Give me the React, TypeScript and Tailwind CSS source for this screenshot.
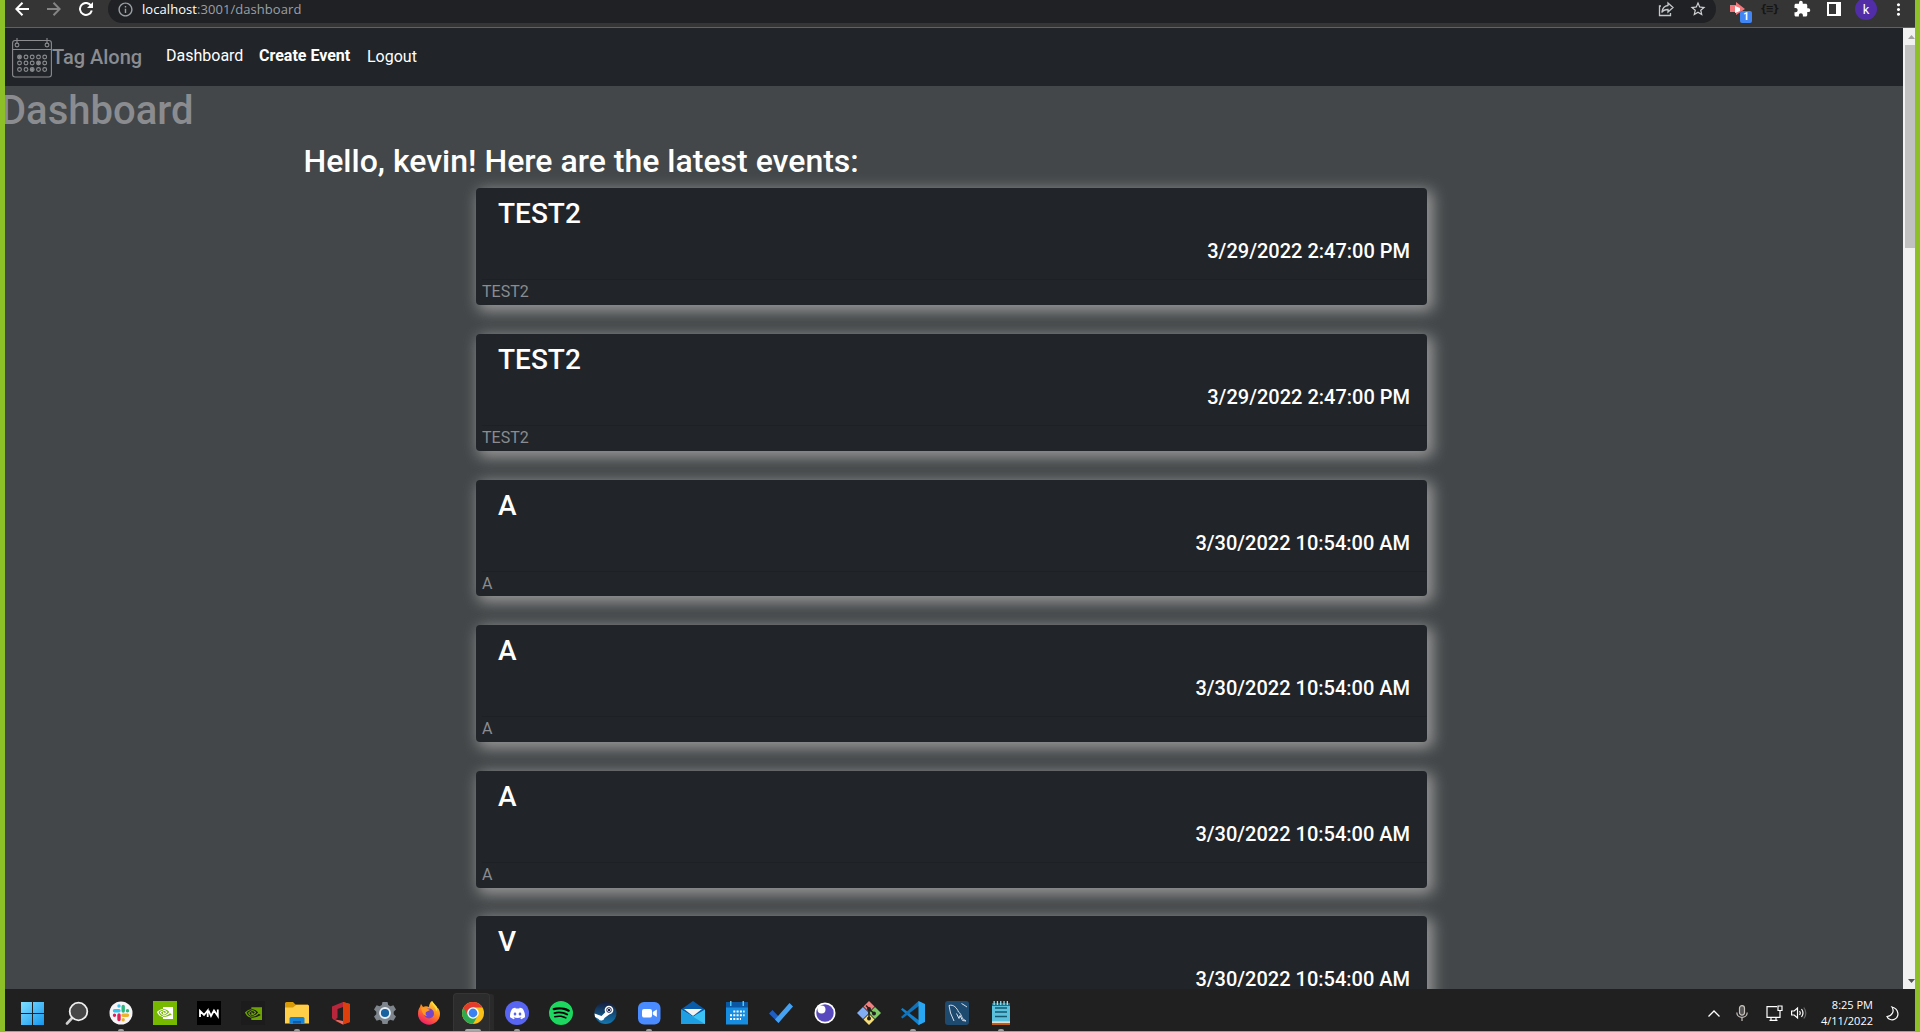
import type { ReactNode } from "react";
import { MdInfoOutline, MdExtension, MdMoreVert, MdStarOutline } from "react-icons/md";
import { BsNvidia, BsDiscord, BsSpotify } from "react-icons/bs";

type EventItem = { title: string; date: string; body: string };

const EVENTS: EventItem[] = [
  { title: "TEST2", date: "3/29/2022 2:47:00 PM", body: "TEST2" },
  { title: "TEST2", date: "3/29/2022 2:47:00 PM", body: "TEST2" },
  { title: "A", date: "3/30/2022 10:54:00 AM", body: "A" },
  { title: "A", date: "3/30/2022 10:54:00 AM", body: "A" },
  { title: "A", date: "3/30/2022 10:54:00 AM", body: "A" },
  { title: "V", date: "3/30/2022 10:54:00 AM", body: "" },
];

function BrowserBar() {
  return (
    <div className="flex h-[28px] shrink-0 overflow-hidden border-b border-[#5f6163] bg-[#353535] text-white">
      <div className="flex h-[18px] w-full items-center">
        <svg className="ml-[10px] size-[14px] shrink-0" viewBox="0 0 14 14" fill="none" stroke="#fff" strokeWidth="2">
          <path d="M14 7H1.500M7.500 .8L1.300 7l6.200 6.200" />
        </svg>
        <svg className="ml-[18px] size-[14px] shrink-0" viewBox="0 0 14 14" fill="none" stroke="#858585" strokeWidth="2">
          <path d="M0 7h12.500M6.500 .8L12.700 7l-6.200 6.200" />
        </svg>
        <svg className="ml-[18px] size-[14px] shrink-0" viewBox="0 0 14 14" fill="none" stroke="#fff" strokeWidth="2">
          <path d="M12 3.600A6 6 0 1 0 12.800 8.500" />
          <path d="M14 0v6H8z" fill="#fff" stroke="none" />
        </svg>
        <div className="ml-[15px] flex h-[28px] w-[1608px] shrink-0 items-center rounded-full bg-[#202124]">
          <MdInfoOutline className="ml-[9px] size-[17px] text-[#9aa0a6]" />
          <span className="ml-[8px] pt-px font-['Open_Sans',sans-serif] text-[13px] tracking-[0.06px] text-[#9aa0a6]">
            <span className="text-white">localhost</span>:3001/dashboard
          </span>
          <svg className="mr-[15px] ml-auto size-[16px]" viewBox="0 0 16 16" fill="none" stroke="#c4c7c9" strokeWidth="1.3">
            <path d="M3 5H1.500v9.500h11V12" />
            <path d="M10 2l5 4.500-5 4.500V8.500C7 8.500 5 9.500 3.800 11.500 4.300 7.500 6.500 4.800 10 4.500z" />
          </svg>
          <MdStarOutline className="mr-[9px] size-[18px] text-[#d0d2d4]" />
        </div>
        <div className="relative ml-[13px] h-[28px] w-[24px] shrink-0">
          <svg className="absolute top-[7px] left-0 h-[14px] w-[18px]" viewBox="0 0 18 14">
            <path d="M1 3h6V0l9 7-9 6v-3H1z" fill="#f4777c" />
            <path d="M6 4l5 2v3l-5 2z" fill="#fff" />
          </svg>
          <span className="absolute top-[16px] left-[11px] flex size-[12px] items-center justify-center rounded-[2px] bg-[#4285f4] font-['Roboto',sans-serif] text-[10px] leading-none font-bold">1</span>
        </div>
        <span className="ml-[7px] w-[16px] text-center font-['DejaVu_Sans',sans-serif] text-[10px] leading-none font-bold tracking-[-1.5px] text-[#161616]">{"{≡}"}</span>
        <MdExtension className="ml-[17px] size-[18px] shrink-0" />
        <div className="ml-[16px] h-[14px] w-[14px] shrink-0 border-2 border-r-[5px] border-white" />
        <div className="ml-[14px] flex size-[22px] shrink-0 items-center justify-center rounded-full bg-[#512da8] font-['Roboto',sans-serif] text-[13px] leading-none">k</div>
        <MdMoreVert className="ml-[12px] size-[19px] shrink-0" />
      </div>
    </div>
  );
}

function CalendarLogo() {
  return (
    <svg className="size-[40px]" viewBox="0 0 40 40" fill="none" stroke="#8b8c90" strokeWidth="1.1">
      <rect x="0.6" y="2.500" width="38.800" height="36.500" rx="2.500" />
      <path d="M1 11.500h38M5 0v5M35 0v5" />
      <circle cx="5" cy="7" r="1.900" />
      <circle cx="35" cy="7" r="1.900" />
      {[19, 25, 31.5].map((y) =>
        [7.500, 14, 20.200, 26.500, 32.700].map((x) => <circle key={`${x}-${y}`} cx={x} cy={y} r="1.900" />)
      )}
      <g fill="#8b8c90" stroke="none">
        <circle cx="7.500" cy="19" r="1.500" />
        <circle cx="26.500" cy="25" r="1.500" />
        <circle cx="20.200" cy="31.500" r="1.500" />
      </g>
    </svg>
  );
}

function NavBar() {
  return (
    <nav className="flex h-[58px] shrink-0 items-start bg-[#212529] pl-[7px] text-[16px] leading-6 text-white">
      <div className="mt-[10px]"><CalendarLogo /></div>
      <span className="mt-[14px] w-[114px] text-[20px] leading-[30px] font-medium text-[#8b8c90]">Tag Along</span>
      <a className="mt-[16px] w-[93px]">Dashboard</a>
      <a className="mt-[16px] w-[108px] font-bold">Create Event</a>
      <a className="mt-[17px]">Logout</a>
    </nav>
  );
}

function EventCard({ title, date, body }: EventItem) {
  return (
    <article className="mb-[28.8px] h-[116.8px] w-[951px] shrink-0 rounded-[4px] bg-[#212529] shadow-[4px_4px_15px_2px_#999999]">
      <div className="h-[91px] pt-[8px] pr-[17px] pl-[22px] font-medium text-white">
        <h3 className="text-[28px] leading-[36px]">{title}</h3>
        <h5 className="mt-[7px] text-right text-[20px] leading-[24px]">{date}</h5>
      </div>
      <div className="ml-[6px] border-t border-[#1d2024]">
        <p className="text-[16px] leading-6 text-[#8b8c90]">{body}</p>
      </div>
    </article>
  );
}

function Scrollbar() {
  return (
    <div className="flex w-[12px] shrink-0 flex-col items-end bg-[#f1f1f1]">
      <div className="flex h-[17px] w-full items-center justify-end">
        <svg className="h-[4px] w-[7px]" viewBox="0 0 7 4"><path d="M0 4L3.500 0 7 4z" fill="#a3a3a3" /></svg>
      </div>
      <div className="h-[203px] w-[10px] bg-[#c1c1c1]" />
      <div className="mt-auto flex h-[17px] w-full items-center justify-end">
        <svg className="h-[4px] w-[7px]" viewBox="0 0 7 4"><path d="M0 0L3.500 4 7 0z" fill="#505050" /></svg>
      </div>
    </div>
  );
}

function Svg({ children }: { children: ReactNode }) {
  return <svg className="size-[24px]" viewBox="0 0 24 24" fill="none">{children}</svg>;
}

const windowsIcon = (
  <Svg>
    <defs><linearGradient id="win" x1="0" y1="0" x2="1" y2="1"><stop stopColor="#7fe0ff" /><stop offset="1" stopColor="#1597ef" /></linearGradient></defs>
    <path d="M0 1h11v11H0zM12 1h11v11H12zM0 13h11v11H0zM12 13h11v11H12z" fill="url(#win)" />
  </Svg>
);
const searchIcon = (
  <Svg>
    <path d="M8 16L2 22.500" stroke="#cfcfcf" strokeWidth="2.600" strokeLinecap="round" />
    <circle cx="13.500" cy="10.500" r="8.800" fill="#474747" stroke="#f0f0f0" strokeWidth="1.800" />
  </Svg>
);
const slackIcon = (
  <Svg>
    <circle cx="12" cy="12" r="11.500" fill="#f7f5f7" />
    <g strokeWidth="3.400" strokeLinecap="round">
      <path d="M5.500 9.800h4.500M10 5v.01" stroke="#36c5f0" />
      <path d="M14.200 5.500V10M18.500 9.800v.01" stroke="#2eb67d" />
      <path d="M18.500 14.200H14M14.200 18.800v.01" stroke="#ecb22e" />
      <path d="M10 18.500V14M5.500 14.200v.01" stroke="#e01e5a" />
    </g>
  </Svg>
);
const nvidiaIcon = <div className="flex size-[24px] items-center justify-center bg-[#76b900]"><BsNvidia className="size-[16px] text-white" /></div>;
const warfareIcon = (
  <div className="size-[24px] bg-black">
    <Svg>
      <path d="M3 16V10l4 4 3.700-4.500V16M11.500 9.500l2.500 5.500 3-5.500 3.800 5.500V8.500" stroke="#fff" strokeWidth="1.800" />
    </Svg>
  </div>
);
const nvidiaPanelIcon = <div className="flex size-[24px] items-center justify-center bg-[#1c1c1c]"><BsNvidia className="size-[17px] text-[#6ca303]" /></div>;
const folderIcon = (
  <Svg>
    <path d="M0 2.500Q0 1 1.500 1H8l2.500 2.500H23V9H0z" fill="#d99a07" />
    <path d="M0 6.500h8l3-2.500h12q1 0 1 1v17.500H0z" fill="#ffcf4a" />
    <path d="M4.500 22.500v-5q0-1.500 1.500-1.500h12q1.500 0 1.500 1.500v5z" fill="#1683d8" />
    <path d="M8 22.500V20h8v2.500z" fill="#0d5ca8" />
  </Svg>
);
const officeIcon = (
  <Svg>
    <path d="M3 5.500L14 1v5L8.500 8v9L5 19l-2-2z" fill="#b9263c" />
    <path d="M14 1l7 2v18l-7 2.500-8.500-4L14 20z" fill="#e64a19" />
    <path d="M14 1l7 2v18l-7 2.500z" fill="#dc3f0b" />
    <path d="M3 17l3 1.500 8 1.500v3.500z" fill="#f06a6d" />
  </Svg>
);
const settingsIcon = (
  <Svg>
    <path d="M9.500 1h5l.7 3 2.200 1.200 3-1 2.600 4.300-2.300 2.200v2.600l2.300 2.200-2.600 4.300-3-1-2.200 1.200-.7 3h-5l-.7-3-2.200-1.200-3 1L1 15.500l2.300-2.200v-2.600L1 8.500l2.600-4.300 3 1L8.800 4z" fill="#7e858c" />
    <circle cx="12" cy="12" r="5" fill="#17629f" stroke="#e9f0f5" strokeWidth="1.800" />
  </Svg>
);
const firefoxIcon = (
  <Svg>
    <defs><linearGradient id="ff" x1=".8" y1="0" x2=".3" y2="1"><stop stopColor="#ffe23c" /><stop offset=".45" stopColor="#ff8a1c" /><stop offset="1" stopColor="#f5156c" /></linearGradient></defs>
    <path d="M15 0c1 3 3 4 5 6.500 2 1 3 4 3 6.500a11 10.700 0 0 1-22 0c0-4 1-6 2-7l1-3 2 3c2-1 4-1 6 0 0-2 1-5 3-6z" fill="url(#ff)" />
    <circle cx="12" cy="12.500" r="5" fill="#7447c9" />
    <path d="M4 7c3-1 5 0 7 1l2 1-4 2c-1 2 0 3 1 4-3 0-5-3-6-8z" fill="#ff9a20" />
    <path d="M15 0c-1 4 4 5 4 10 2-1 1-3 1-4z" fill="#ffe03c" />
  </Svg>
);
const chromeIcon = (
  <Svg>
    <circle cx="12" cy="12" r="11" fill="#fbc116" />
    <path d="M2.500 6.500A11 11 0 0 0 12 23l4.800-8.200-5-3z" fill="#2da94f" />
    <path d="M2.500 6.500A11 11 0 0 1 21.500 6.500H12V12L7.200 14.800z" fill="#e33b2e" />
    <circle cx="12" cy="12" r="5.100" fill="#3b82f0" stroke="#fff" strokeWidth="1.400" />
  </Svg>
);
const discordIcon = <div className="flex size-[24px] items-center justify-center rounded-full bg-[#5865f2]"><BsDiscord className="size-[15px] text-white" /></div>;
const spotifyIcon = <div className="rounded-full bg-black"><BsSpotify className="size-[24px] text-[#1ed760]" /></div>;
const steamIcon = (
  <Svg>
    <defs><linearGradient id="steam" x1="0" y1="0" x2="0" y2="1"><stop stopColor="#141c3c" /><stop offset="1" stopColor="#1378b0" /></linearGradient></defs>
    <circle cx="12.500" cy="12" r="11" fill="url(#steam)" />
    <path d="M1.500 12.500l7 2.500 5-5 4 2.500-6 4.500a3.300 3.300 0 0 1-6 1L2 16z" fill="#fff" />
    <circle cx="16" cy="9" r="3.500" fill="#18204a" stroke="#fff" strokeWidth="1.700" />
    <circle cx="16" cy="9" r="1.700" stroke="#fff" strokeWidth=".7" />
  </Svg>
);
const zoomIcon = (
  <Svg>
    <rect x="1" y="1" width="22.500" height="22.500" rx="6" fill="#4a8cff" />
    <rect x="5" y="8" width="10" height="8.500" rx="2" fill="#fff" />
    <path d="M15.800 11l4-2.500v7.500l-4-2.500z" fill="#fff" />
  </Svg>
);
const mailIcon = (
  <Svg>
    <path d="M0 8.500L12 0l12 8.500V14H0z" fill="#0a5ca8" />
    <path d="M0 8.500l12 7 12-7V23H0z" fill="#3cc3f5" />
    <path d="M0 8.500L24 23H0z" fill="#1e9fe3" />
    <path d="M3 8h18l-9 7z" fill="#f2f2f2" />
  </Svg>
);
const calendarIcon = (
  <Svg>
    <path d="M1 1h22v22.500H1z" fill="#168de0" />
    <path d="M1 1h22v5.500H1z" fill="#0b57a4" />
    <path d="M5 0h1.500v5H5zM17.500 0H19v5h-1.500z" fill="#4cc9f8" />
    <path d="M8.300 10.500h11.300M5 14.300h14.600M5 18h11" stroke="#fff" strokeWidth="2" strokeDasharray="2 1.300" />
  </Svg>
);
const todoIcon = <Svg><path d="M0 12.500L3.500 9l8.500 9-2.500 4z" fill="#1f5fc4" /><path d="M6 18.500L20.500 2 24 5.500 9.500 22z" fill="#45a2f2" /></Svg>;
const insomniaIcon = (
  <Svg>
    <circle cx="12" cy="12" r="10.500" fill="#fff" />
    <circle cx="12" cy="12" r="8.700" fill="#5849be" />
    <circle cx="8.500" cy="8.500" r="4" fill="#fff" />
  </Svg>
);
const gitIcon = (
  <Svg>
    <path d="M12 0l5.500 5.500L12 11 6.500 5.500z" fill="#f08080" />
    <path d="M6 6l6 6-6 6-6-6z" fill="#82aef5" />
    <path d="M18 6l6 6-6 6-6-6z" fill="#80c968" />
    <path d="M12 13l5.500 5.500L12 24l-5.500-5.500z" fill="#f5de7a" />
    <path d="M9 4.500l3 3V17M12 8l4.500 4" stroke="#20201c" strokeWidth="1.500" />
    <g fill="#20201c"><circle cx="12" cy="8" r="2" /><circle cx="12" cy="17.500" r="2" /><circle cx="17" cy="12.500" r="2" /></g>
  </Svg>
);
const codeIcon = (
  <Svg>
    <path d="M1.500 7L0 8.500 17.500 24l4-2z" fill="#1381cd" />
    <path d="M1.500 17.500L0 16 17.500 0l3 3z" fill="#1073ba" />
    <path d="M17.500 0L24 3v18l-6.500 3z" fill="#2aa7f2" />
  </Svg>
);
const workbenchIcon = (
  <Svg>
    <rect width="24" height="24" rx="3" fill="#1f4a70" />
    <path d="M9 20L5.500 12 4 4.500C8.500 3 12 7 13.500 11c2 1 3 4 4 6.500L21 20l-3.500-.5-2.500-5-1 3-2.500-5M16.500 2.500L19 4l3 2" stroke="#d5dfe8" strokeWidth="1" />
  </Svg>
);
const notepadIcon = (
  <Svg>
    <path d="M3 2h18v20H3z" fill="#5bc0dc" />
    <path d="M3 2h18v3H3z" fill="#256f86" />
    <path d="M3 21.500h18V24H3z" fill="#c25d15" />
    <path d="M3 20.500h18v1.300H3z" fill="#f4efe7" />
    <path d="M4.500 2h15" stroke="#8de4f7" strokeWidth="4" strokeDasharray="1.300 2" />
    <path d="M6 7h12M6 11h12M6 15.500h12" stroke="#14596f" strokeWidth="1.500" />
  </Svg>
);

const APPS: { icon: ReactNode; mark?: "dot" | "active" }[] = [
  { icon: windowsIcon },
  { icon: searchIcon },
  { icon: slackIcon, mark: "dot" },
  { icon: nvidiaIcon },
  { icon: warfareIcon },
  { icon: nvidiaPanelIcon },
  { icon: folderIcon, mark: "dot" },
  { icon: officeIcon },
  { icon: settingsIcon },
  { icon: firefoxIcon },
  { icon: chromeIcon, mark: "active" },
  { icon: discordIcon, mark: "dot" },
  { icon: spotifyIcon },
  { icon: steamIcon },
  { icon: zoomIcon, mark: "dot" },
  { icon: mailIcon },
  { icon: calendarIcon },
  { icon: todoIcon },
  { icon: insomniaIcon },
  { icon: gitIcon },
  { icon: codeIcon, mark: "dot" },
  { icon: workbenchIcon },
  { icon: notepadIcon, mark: "dot" },
];

function Taskbar() {
  return (
    <footer className="flex h-[42px] shrink-0 bg-[#202020] pl-[6px]">
      {APPS.map(({ icon, mark }, i) => (
        <div key={i} className="flex w-[44px] shrink-0 flex-col">
          <div
            className={
              mark === "active"
                ? "mt-[4px] mr-[5px] ml-[2px] flex h-[38px] flex-col items-center rounded-t-[4px] border border-b-0 border-[#353535] bg-[#2c2c2c] pt-[7px] pl-[3px] shadow-[5px_0_0_-1px_#2a2a2a]"
                : "flex h-[42px] flex-col items-center pt-[12px]"
            }
          >
            {icon}
            {mark === "dot" && <span className="mt-auto h-[2px] w-[6px] rounded-t-full bg-[#9a9a9a]" />}
            {mark === "active" && <span className="mt-auto h-[2px] w-[16px] rounded-t-full bg-[#a8a8a8]" />}
          </div>
        </div>
      ))}
      <div className="ml-auto flex h-full items-center pt-[6px] pr-[16px] text-white">
        <svg className="h-[7px] w-[12px]" viewBox="0 0 12 7" fill="none" stroke="#fff" strokeWidth="1.300"><path d="M.5 6.500L6 1l5.500 5.500" /></svg>
        <svg className="ml-[16px] h-[16px] w-[12px]" viewBox="0 0 12 16" fill="none" stroke="#c9c3bd" strokeWidth="1.200">
          <rect x="3.500" y=".6" width="5" height="9.500" rx="2.500" fill="#555" />
          <path d="M.8 7.500c0 6.500 10.400 6.500 10.400 0M6 12.500V16" />
        </svg>
        <svg className="ml-[18px] h-[16px] w-[17px]" viewBox="0 0 17 16" fill="none" stroke="#fff" strokeWidth="1.200">
          <path d="M11 1.600H1v10.800h13V8M5 12.500V15M10 12.500V15M3.500 15.300h8M12 1h4v4.500h-4zM14 5.500V9" />
        </svg>
        <svg className="ml-[8px] h-[14px] w-[16px]" viewBox="0 0 16 14" fill="none" stroke="#fff" strokeWidth="1.200">
          <path d="M.6 5v4h2.600L6.500 12V2L3.200 5zM8.500 5q1.500 2 0 4M10.500 3q3 4 0 8" />
          <path d="M12.800 1.500q4 5.500 0 11" stroke="#666" />
        </svg>
        <div className="ml-[12px] w-[54px] text-right font-['Open_Sans',sans-serif] text-[11px] leading-[16px] font-medium whitespace-nowrap">
          <div>8:25 PM</div>
          <div>4/11/2022</div>
        </div>
        <svg className="ml-[13px] h-[15px] w-[13px]" viewBox="0 0 13 15" fill="none" stroke="#fff" strokeWidth="1.200">
          <path d="M6 1c2.500 4 .5 9-5 9.500 1 3 5 4.200 8 2.500C13.500 10.500 13 3 6 1z" />
        </svg>
      </div>
    </footer>
  );
}

export default function App() {
  return (
    <div className="flex h-[1032px] w-[1920px] flex-col overflow-hidden border-r-[5px] border-b border-l-[5px] border-[#8dbf26] bg-[#434749] font-['Roboto',sans-serif]">
      <BrowserBar />
      <div className="flex h-[961px] shrink-0">
        <div className="flex w-[1898px] shrink-0 flex-col overflow-hidden">
          <NavBar />
          <main className="flex h-[903px] flex-col overflow-hidden">
            <h1 className="-ml-[5px] h-[56px] shrink-0 text-[40px] leading-[50px] font-medium text-[#8b8c90]">Dashboard</h1>
            <h2 className="h-[46.4px] shrink-0 pl-[298.5px] text-[32px] leading-[38px] font-medium text-white">Hello, kevin! Here are the latest events:</h2>
            <div className="flex flex-col pl-[471px]">
              {EVENTS.map((event, i) => (
                <EventCard key={i} {...event} />
              ))}
            </div>
          </main>
        </div>
        <Scrollbar />
      </div>
      <Taskbar />
    </div>
  );
}
